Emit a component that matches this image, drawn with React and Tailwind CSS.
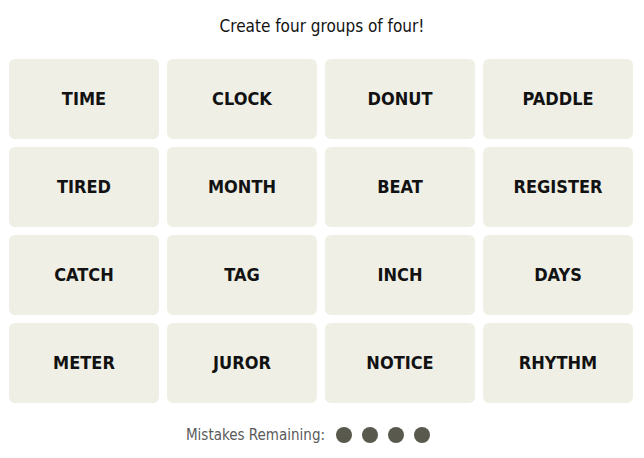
const words = [
  'TIME', 'CLOCK', 'DONUT', 'PADDLE',
  'TIRED', 'MONTH', 'BEAT', 'REGISTER',
  'CATCH', 'TAG', 'INCH', 'DAYS',
  'METER', 'JUROR', 'NOTICE', 'RHYTHM',
];

export default function App() {
  return (
    <div className="w-[644px] h-[458px] bg-white flex flex-col items-center" style={{ fontFamily: '"Liberation Sans Narrow", "DejaVu Sans Condensed", "Liberation Sans", sans-serif' }}>
      <p className="mt-[15px] h-[22px] text-[17px] leading-[22px] text-[#121212]">Create four groups of four!</p>
      <div className="mt-[22px] grid grid-cols-4 gap-2 w-[624px] ml-[-2px]">
        {words.map((w) => (
          <div key={w} className="h-20 rounded-md bg-[#efefe6] flex items-center justify-center pb-px text-[18px] font-bold text-[#121212]">
            {w}
          </div>
        ))}
      </div>
      <div className="mt-[21px] mr-[28px] flex items-center gap-[11px]">
        <span className="text-[15px] text-[#5a5a5a]">Mistakes Remaining:</span>
        <div className="flex gap-[10px]">
          <span className="w-4 h-4 rounded-full bg-[#5a594e]" />
          <span className="w-4 h-4 rounded-full bg-[#5a594e]" />
          <span className="w-4 h-4 rounded-full bg-[#5a594e]" />
          <span className="w-4 h-4 rounded-full bg-[#5a594e]" />
        </div>
      </div>
    </div>
  );
}
